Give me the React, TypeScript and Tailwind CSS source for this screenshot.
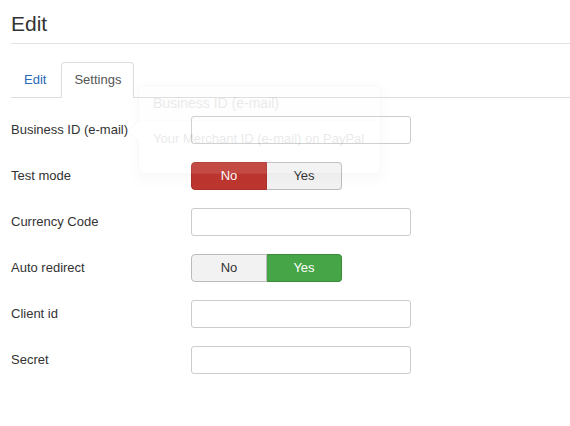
import React from 'react';

const font = { fontFamily: '"Liberation Sans", Arial, sans-serif' };

interface ToggleProps {
  value: 'no' | 'yes';
}

const Toggle: React.FC<ToggleProps> = ({ value }) => (
  <div className="flex h-[28px] w-[151px]">
    <div
      className={
        value === 'no'
          ? 'flex w-[76px] items-center justify-center rounded-l-[4px] border border-[#a9302a] bg-[#bd362f] text-[13px] text-white'
          : 'flex w-[76px] items-center justify-center rounded-l-[4px] border border-[#bbbbbb] bg-[#f2f2f2] text-[13px] text-[#333]'
      }
    >
      No
    </div>
    <div
      className={
        value === 'yes'
          ? 'flex w-[75px] items-center justify-center rounded-r-[4px] border border-l-0 border-[#3b8b3b] bg-[#46a546] text-[13px] text-white'
          : 'flex w-[75px] items-center justify-center rounded-r-[4px] border border-l-0 border-[#bbbbbb] bg-[#f2f2f2] text-[13px] text-[#333]'
      }
    >
      Yes
    </div>
  </div>
);

const Field: React.FC<{ label: string; children: React.ReactNode }> = ({ label, children }) => (
  <div className="flex h-[28px] items-center">
    <div className="w-[180px] text-[13px] leading-[18px] text-[#333]">{label}</div>
    {children}
  </div>
);

const TextInput: React.FC = () => (
  <div className="h-[28px] w-[220px] rounded-[3px] border border-[#cccccc] bg-white" />
);

export default function App() {
  return (
    <div className="relative min-h-[426px] bg-white pl-[11px]" style={font}>
      <h2 className="pt-[12px] text-[21px] leading-[24px] text-[#333]">Edit</h2>
      <div className="mt-[7px] border-b border-[#e2e2e2]" />

      <div className="mt-[18px] flex border-b border-[#dddddd]">
        <div className="mr-[2px] -mb-px px-[13px] pt-[9px] pb-[8px] text-[13px] leading-[18px] text-[#2a69b8]">
          Edit
        </div>
        <div className="-mb-px rounded-t-[4px] border border-b-0 border-[#dddddd] bg-white px-[12px] pt-[8px] pb-[9px] text-[13px] leading-[18px] text-[#555]">
          Settings
        </div>
      </div>

      <div className="mt-[18px] flex flex-col gap-[18px]">
        <Field label="Business ID (e-mail)">
          <TextInput />
        </Field>
        <Field label="Test mode">
          <Toggle value="no" />
        </Field>
        <Field label="Currency Code">
          <TextInput />
        </Field>
        <Field label="Auto redirect">
          <Toggle value="yes" />
        </Field>
        <Field label="Client id">
          <TextInput />
        </Field>
        <Field label="Secret">
          <TextInput />
        </Field>
      </div>

      {/* fading popover */}
      <div className="absolute top-[85px] left-[138px] w-[243px] opacity-[0.1]">
        <div className="relative h-[89px] rounded-[6px] border border-[#00000033] bg-white shadow-[0_5px_10px_rgba(0,0,0,0.2)]">
          <div className="absolute top-[34px] -left-[11px] h-0 w-0 border-y-[11px] border-r-[11px] border-y-transparent border-r-[#00000040]" />
          <div className="absolute top-[35px] -left-[10px] h-0 w-0 border-y-[10px] border-r-[10px] border-y-transparent border-r-white" />
          <div className="rounded-t-[5px] border-b border-[#ebebeb] bg-[#f7f7f7] px-[14px] py-[8px] text-[14px] leading-[18px] text-[#333]">
            Business ID (e-mail)
          </div>
          <div className="px-[14px] py-[9px] text-[13px] leading-[18px] text-[#333]">
            Your Merchant ID (e-mail) on PayPal
          </div>
        </div>
      </div>
    </div>
  );
}
